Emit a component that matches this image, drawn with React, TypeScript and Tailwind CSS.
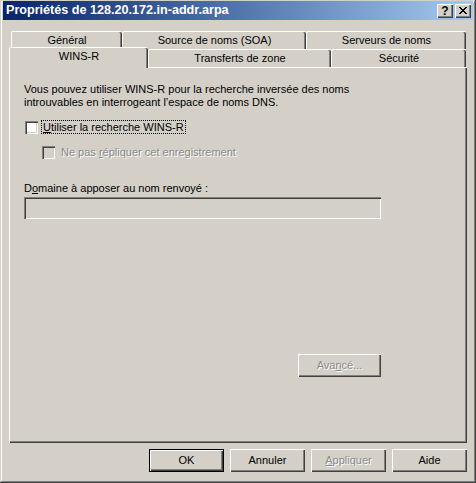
const raised =
  "shadow-[inset_1px_1px_#ffffff,inset_-1px_-1px_#404040,inset_-2px_-2px_#808080]";
const sunken =
  "shadow-[inset_1px_1px_#808080,inset_2px_2px_#404040,inset_-1px_-1px_#ffffff,inset_-2px_-2px_#d4d0c8]";
const disabledText = "text-[#8a8a8a] [text-shadow:1px_1px_0_#ffffff]";

function Tab({ label, width }: { label: string; width: number }) {
  return (
    <div
      style={{ width }}
      className="h-[18px] flex items-center justify-center rounded-tl-[2px] rounded-tr-[2px] border-l border-t border-white shadow-[inset_-1px_0_#404040,inset_-2px_0_#808080]"
    >
      {label}
    </div>
  );
}

function Button({
  children,
  isDefault,
  disabled,
  w = "w-[75px]",
}: {
  children: React.ReactNode;
  isDefault?: boolean;
  disabled?: boolean;
  w?: string;
}) {
  const inner = (
    <div className={`h-full flex items-center justify-center ${raised} ${disabled ? disabledText : ""}`}>
      {children}
    </div>
  );
  return (
    <div className={`${w} h-[23px] bg-[#d4d0c8] ${isDefault ? "border border-black" : ""}`}>{inner}</div>
  );
}

function Checkbox({ disabled }: { disabled?: boolean }) {
  return (
    <div className={`w-[13px] h-[13px] shrink-0 ${sunken} ${disabled ? "bg-[#d4d0c8]" : "bg-white"}`} />
  );
}

export default function App() {
  return (
    <div
      className="w-[476px] h-[483px] bg-[#d4d0c8] px-[3px] pt-px text-[11px] leading-[13px] text-black shadow-[inset_-1px_-1px_#404040,inset_1px_1px_#d4d0c8,inset_-2px_-2px_#808080,inset_2px_2px_#ffffff]"
      style={{ fontFamily: '"Liberation Sans", Arial, sans-serif' }}
    >
      {/* title bar */}
      <div className="h-[19px] flex items-center bg-gradient-to-r from-[#0a246a] to-[#a6caf0] pl-[3px] pr-[2px]">
        <span className="text-white font-bold text-[12.6px]">Propriétés de 128.20.172.in-addr.arpa</span>
        <div className="ml-auto flex gap-[2px]">
          <div className={`w-[16px] h-[14px] bg-[#d4d0c8] flex items-center justify-center font-bold text-[12px] leading-none ${raised}`}>
            ?
          </div>
          <div className={`w-[16px] h-[14px] bg-[#d4d0c8] flex items-center justify-center ${raised}`}>
            <svg width="8" height="7" viewBox="0 0 8 7" shapeRendering="crispEdges">
              <path d="M0 0h2v1h-2zM6 0h2v1h-2zM1 1h2v1h-2zM5 1h2v1h-2zM2 2h4v1h-4zM3 3h2v1h-2zM2 4h4v1h-4zM1 5h2v1h-2zM5 5h2v1h-2zM0 6h2v1h-2zM6 6h2v1h-2z" fill="#000" />
            </svg>
          </div>
        </div>
      </div>

      <div className="px-[6px]">
        {/* tabs */}
        <div className="mt-[11px] pl-[2px] flex">
          <Tab label="Général" width={111} />
          <Tab label="Source de noms (SOA)" width={184} />
          <Tab label="Serveurs de noms" width={160} />
        </div>
        <div className="pl-[2px] flex items-end">
          <div className="relative z-10 -ml-[2px] -mb-px w-[139px] h-[21px] -mt-[2px] bg-[#d4d0c8] flex items-center justify-center pb-[3px] rounded-tl-[2px] rounded-tr-[2px] border-l border-t border-white shadow-[inset_-1px_0_#404040,inset_-2px_0_#808080]">
            WINS-R
          </div>
          <Tab label="Transferts de zone" width={183} />
          <Tab label="Sécurité" width={135} />
        </div>

        {/* panel */}
        <div className="h-[376px] border-l border-t border-white shadow-[inset_-1px_-1px_#404040,inset_-2px_-2px_#808080] pl-[14px] pt-[15px]">
          <div className="w-[357px]">
            <p className="whitespace-nowrap">Vous pouvez utiliser WINS-R pour la recherche inversée des noms</p>
            <p className="whitespace-nowrap">introuvables en interrogeant l’espace de noms DNS.</p>

            <div className="mt-[11px] flex items-center ml-px">
              <Checkbox />
              <span className="ml-[3px] px-[1px] border border-dotted border-black leading-[12px]">
                <u>U</u>tiliser la recherche WINS-R
              </span>
            </div>

            <div className="mt-[12px] flex items-center ml-[18px]">
              <Checkbox disabled />
              <span className={`ml-[6px] ${disabledText}`}>
                Ne pas <u>r</u>épliquer cet enregistrement
              </span>
            </div>

            <p className="mt-[23px]">
              D<u>o</u>maine à apposer au nom renvoyé :
            </p>
            <div className={`mt-[2px] h-[22px] w-[357px] bg-[#d4d0c8] ${sunken}`} />

            <div className="mt-[135px] flex justify-end">
              <Button disabled w="w-[83px]">
                Ava<u>n</u>cé...
              </Button>
            </div>
          </div>
        </div>

        {/* bottom buttons */}
        <div className="mt-[6px] flex justify-end gap-[6px]">
          <Button isDefault>OK</Button>
          <Button>Annuler</Button>
          <Button disabled>
            <span>
              <u>A</u>ppliquer
            </span>
          </Button>
          <Button>Aide</Button>
        </div>
      </div>
    </div>
  );
}
